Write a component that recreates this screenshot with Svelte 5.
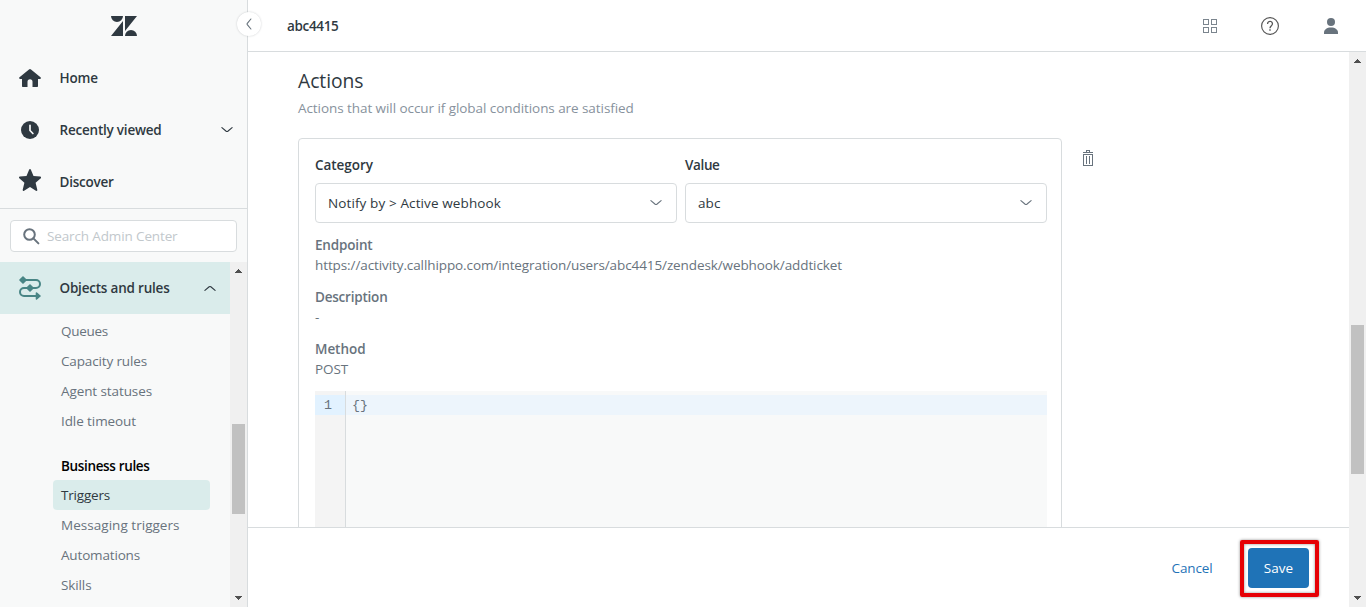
<script>
  const queueLinks = [
    ['Queues', 47],
    ['Capacity rules', 86],
    ['Agent statuses', 91],
    ['Idle timeout', 75]
  ];
  const ruleLinks = [
    ['Triggers', 49],
    ['Messaging triggers', 118.5],
    ['Automations', 79],
    ['Skills', 30.5]
  ];
  const details = [
    ['Endpoint', 57.5, 'https://activity.callhippo.com/integration/users/abc4415/zendesk/webhook/addticket', 527],
    ['Description', 72.5, '-', 6],
    ['Method', 50.5, 'POST', 33]
  ];

  // Tracks a label so that its advance equals the given width.
  function track(node, width) {
    const natural = node.getBoundingClientRect().width;
    const count = node.textContent.length;
    node.style.letterSpacing = `${(width - natural) / count}px`;
  }
</script>

{#snippet chevron(up)}
  <svg class="chevron" class:up width="12" height="8" viewBox="0 0 12 8" fill="none" stroke="currentColor" stroke-linecap="round">
    <path d="M.9 1.6l4.3 3.6c.5.4 1.1.4 1.6 0l4.3-3.6" stroke-width="1.15" />
  </svg>
{/snippet}

{#snippet scrollbar(thumbTop, thumbHeight)}
  <div class="scrollbar">
    <svg class="arrow" width="17" height="17" viewBox="0 0 17 17" shape-rendering="crispEdges"><path d="M5 11h7v-1h-1V9h-1V8H9V7H8v1H7v1H6v1H5z" fill="#505050" /></svg>
    <div class="rail"><div class="thumb" style="margin-top:{thumbTop}px;height:{thumbHeight}px"></div></div>
    <svg class="arrow" width="17" height="17" viewBox="0 0 17 17" shape-rendering="crispEdges"><path d="M5 6h7v1h-1v1h-1v1H9v1H8V9H7V8H6V7H5z" fill="#505050" /></svg>
  </div>
{/snippet}

<div class="app">
  <aside class="sidebar">
    <div class="logo">
      <svg width="26" height="20" viewBox="0 0 26 20" fill="#2f3941">
        <path d="M0 0h12a6 6 0 0 1-12 0zM12 5v15H0zM14 0h12L14 15zM14 20a6 6 0 0 1 12 0z" />
      </svg>
    </div>
    <div class="nav">
      <span class="nav-icon">
        <svg width="22" height="18" viewBox="0 0 22 18" fill="#2f3941">
          <path d="M10 .4a1.6 1.6 0 0 1 2 0l9.5 7.800c.9.800.4 1.800-.6 1.800H19v7c0 .6-.4 1-1 1h-4.500v-5.300a2.500 2.500 0 0 0-5 0V18H4c-.6 0-1-.4-1-1v-7H1.100C.1 10-.4 9 .5 8.200z" />
        </svg>
      </span>
      <span use:track={38.5}>Home</span>
    </div>
    <div class="nav">
      <span class="nav-icon">
        <svg width="18" height="18" viewBox="0 0 18 18">
          <circle cx="9" cy="9" r="9" fill="#2f3941" />
          <path d="M9 4.300v5.200l2.900 3" fill="none" stroke="#f8f9f9" stroke-width="1.7" stroke-linecap="round" />
        </svg>
      </span>
      <span use:track={102}>Recently viewed</span>
      <span class="nav-end">{@render chevron(false)}</span>
    </div>
    <div class="nav">
      <span class="nav-icon star">
        <svg width="22" height="22" viewBox="0 0 22 22" fill="#2f3941">
          <path d="M10.200.6c.3-.800 1.300-.800 1.600 0l2.700 6.500 6.700.5c.9.1 1.200 1.100.6 1.600l-5.200 4.500 1.700 7c.2.900-.7 1.500-1.400 1L11 18.100l-5.900 3.600c-.7.500-1.600-.100-1.400-1l1.700-7L.3 9.200c-.7-.500-.3-1.500.5-1.600l6.700-.5z" />
        </svg>
      </span>
      <span use:track={54}>Discover</span>
    </div>
    <div class="search-area">
      <div class="search">
        <svg width="17" height="17" viewBox="0 0 17 17" fill="none" stroke="#68737d" stroke-width="2">
          <circle cx="6.500" cy="6.500" r="5.300" /><path d="M10.400 10.400l5 5" stroke-linecap="round" />
        </svg>
        <span use:track={130.5}>Search Admin Center</span>
      </div>
    </div>
    <div class="menu-scroll">
      <div class="menu">
        <div class="section">
          <span class="nav-icon">
            <svg width="22" height="24" viewBox="0 0 22 24" fill="none" stroke="#488585" stroke-width="2">
              <path d="M4 4h13a4 4 0 0 1 0 8H5a4 4 0 0 0 0 8h13" />
              <path d="M4 1L7 4 4 7 1 4zM11 9l3 3-3 3-3-3zM17.500 17l3.500 3-3.500 3z" fill="#488585" stroke-width="1.6" stroke-linejoin="round" />
            </svg>
          </span>
          <span use:track={110}>Objects and rules</span>
          <span class="nav-end">{@render chevron(true)}</span>
        </div>
        <ul>
          {#each queueLinks as [label, width]}
            <li><span use:track={width}>{label}</span></li>
          {/each}
        </ul>
        <div class="heading"><span use:track={88.5}>Business rules</span></div>
        <ul class="rules">
          {#each ruleLinks as [label, width], i}
            <li class:current={i === 0}><span use:track={width}>{label}</span></li>
          {/each}
        </ul>
      </div>
      {@render scrollbar(145, 90)}
    </div>
  </aside>

  <main>
    <header>
      <strong use:track={51.5}>abc4415</strong>
      <div class="tools">
        <svg width="14" height="14" viewBox="0 0 14 14" fill="none" stroke="#7b858e" shape-rendering="crispEdges">
          <path d="M.5.5h5v5h-5zM8.500.5h5v5h-5zM.5 8.500h5v5h-5zM8.500 8.500h5v5h-5z" />
        </svg>
        <svg width="18" height="18" viewBox="0 0 18 18" fill="none" stroke="#555">
          <circle cx="9" cy="9" r="8.400" stroke-width="1.15" />
          <path d="M6.600 7V6.700a2.400 2.400 0 1 1 4.100 1.700C9.700 9.400 9 9.700 9 11.200" stroke-width="1.3" />
          <path d="M9 12.300v1.500" stroke-width="1.4" />
        </svg>
        <svg width="14" height="16" viewBox="0 0 14 16" fill="#68737d">
          <circle cx="7" cy="4" r="4" /><path d="M0 16v-1.200C0 11.500 2.800 9.500 7 9.500s7 2 7 5.300V16z" />
        </svg>
      </div>
    </header>

    <div class="body">
      <div class="column">
        <div class="content">
          <h2><span use:track={65.5}>Actions</span></h2>
          <p class="hint"><span use:track={335.8}>Actions that will occur if global conditions are satisfied</span></p>
          <div class="action-row">
            <section class="card">
              <div class="fields">
                <div class="field">
                  <div class="label"><span use:track={58}>Category</span></div>
                  <div class="select"><span use:track={173}>Notify by &gt; Active webhook</span>{@render chevron(false)}</div>
                </div>
                <div class="field">
                  <div class="label"><span use:track={34.5}>Value</span></div>
                  <div class="select"><span use:track={22.5}>abc</span>{@render chevron(false)}</div>
                </div>
              </div>
              <dl>
                {#each details as [name, nameWidth, value, valueWidth]}
                  <dt><span use:track={nameWidth}>{name}</span></dt>
                  <dd><span use:track={valueWidth}>{value}</span></dd>
                {/each}
              </dl>
              <div class="editor">
                <div class="gutter"><div>1</div></div>
                <div class="code"><div>{'{}'}</div></div>
              </div>
            </section>
            <svg class="trash" width="12" height="16" viewBox="0 0 12 16" fill="none" stroke="#68737d" shape-rendering="crispEdges">
              <path d="M1.500 4.500h9v11h-9zM1 2.500h10M4.500 2V.5h3V2M4.500 6v8M7.500 6v8" />
            </svg>
          </div>
        </div>
        <footer>
          <span class="cancel" use:track={41}>Cancel</span>
          <div class="highlight"><button><span use:track={29.5}>Save</span></button></div>
        </footer>
      </div>
      {@render scrollbar(256, 149)}
    </div>
  </main>

  <div class="collapse">
    <svg width="6" height="12" viewBox="0 0 6 12" fill="none" stroke="#68737d" stroke-width="1.15" stroke-linecap="round">
      <path d="M4.900 1L1.300 5.300c-.3.400-.3 1 0 1.400L4.900 11" />
    </svg>
  </div>
</div>

<style>
  :global(body) { margin: 0; overflow: hidden; }
  .app {
    position: relative;
    display: flex;
    width: 1366px;
    height: 607px;
    overflow: hidden;
    background: #fff;
    color: #2f3941;
    font: 13.5px/20px "Open Sans", "Noto Sans", sans-serif;
    white-space: nowrap;
  }
  .app :global(*) { box-sizing: border-box; }
  svg { display: block; flex: none; }
  ul, dl, dd, h2, p { margin: 0; padding: 0; list-style: none; }

  .sidebar {
    display: flex;
    flex-direction: column;
    flex: none;
    width: 248px;
    background: #f8f9f9;
    border-right: 1px solid #d8dcde;
  }
  .logo { display: flex; align-items: center; justify-content: center; height: 52px; }
  .nav, .section { display: flex; align-items: center; height: 52px; font-weight: 600; }
  .nav-icon { display: flex; justify-content: center; width: 60px; margin-right: -.5px; }
  .star { padding-bottom: 4px; }
  .nav-end { margin-left: auto; margin-right: 14px; }
  .chevron.up { transform: scaleY(-1); }
  .search-area { height: 54px; padding: 11px 10px 0; border-top: 1px solid #d8dcde; }
  .search {
    display: flex;
    align-items: center;
    gap: 7px;
    height: 32px;
    padding-left: 12px;
    background: #fff;
    border: 1px solid #d8dcde;
    border-radius: 4px;
    color: #c2c8cc;
  }
  .menu-scroll { display: flex; flex: 1; min-height: 0; }
  .menu { flex: 1; overflow: hidden; }
  .section { background: #daeceb; }
  .menu ul { padding: 2px 20px 0 53px; color: #68737d; }
  .menu .rules { padding-top: 0; }
  li { display: flex; align-items: center; height: 30px; padding-left: 8px; border-radius: 4px; }
  li.current { background: #daeceb; color: #2f3941; }
  .heading { height: 28px; margin-top: 16px; padding-left: 61px; line-height: 28px; font-weight: 600; color: #000; }

  .scrollbar { display: flex; flex-direction: column; flex: none; width: 17px; background: #f0f0f0; }
  .rail { flex: 1; padding: 0 2px; }
  .thumb { width: 13px; background: #c1c1c1; }

  main { display: flex; flex-direction: column; flex: 1; min-width: 0; }
  header {
    display: flex;
    align-items: center;
    justify-content: space-between;
    flex: none;
    height: 52px;
    padding: 0 28px 0 39px;
    border-bottom: 1px solid #d8dcde;
  }
  header strong { font-weight: 600; }
  .tools { display: flex; gap: 44px; align-items: center; padding-top: 1px; }
  .tools svg:last-child { margin-left: 1px; }
  .body { display: flex; flex: 1; min-height: 0; }
  .column { display: flex; flex-direction: column; flex: 1; }
  .content { flex: 1; min-height: 0; overflow: hidden; padding: 15px 0 0 50px; }
  h2 { font-size: 19.3px; line-height: 28px; font-weight: 400; }
  .hint { margin-top: 3px; color: #87929d; }
  .action-row { display: flex; align-items: flex-start; gap: 20px; margin-top: 20px; }
  .card { width: 764px; height: 520px; padding: 16px 14px 16px 16px; border: 1px solid #d8dcde; border-radius: 4px; }
  .fields { display: flex; gap: 8px; }
  .field { flex: 1; }
  .label { font-weight: 600; }
  .select {
    display: flex;
    align-items: center;
    justify-content: space-between;
    height: 40px;
    margin-top: 8px;
    padding: 0 14px 0 12px;
    border: 1px solid #d8dcde;
    border-radius: 4px;
  }
  .select .chevron { color: #68737d; }
  dl { padding-top: 12px; color: #68737d; }
  dt { font-weight: 600; }
  dd { margin-bottom: 12px; }
  .editor { display: flex; height: 240px; font: 13.3px/22px "Liberation Mono", monospace; }
  .gutter { width: 31px; padding-top: 4px; background: #f4f4f4; border-right: 1px solid #d8dcde; color: #68737d; }
  .gutter div { height: 20px; padding-left: 9px; background: #e2f2ff; }
  .code { flex: 1; padding-top: 4px; background: #f8f9f9; color: #68737d; }
  .code div { height: 20px; padding-left: 6px; background: #edf5fc; }
  .trash { margin: 12px 0 0; }

  footer {
    display: flex;
    align-items: center;
    justify-content: flex-end;
    flex: none;
    height: 80px;
    padding: 2px 30px 0 0;
    border-top: 1px solid #d8dcde;
  }
  .cancel { margin: 0 27.5px 2px 0; color: #1f73b7; }
  .highlight {
    width: 79px;
    height: 57px;
    margin-bottom: 1px;
    padding: 4px;
    border: 4px solid #e60005;
    border-radius: 2px;
    box-shadow: 0 0 3px rgba(0, 0, 0, .45), inset 0 0 3px rgba(0, 0, 0, .45);
  }
  button {
    display: block;
    width: 61px;
    height: 40px;
    margin: 0;
    padding: 0;
    border: 0;
    border-radius: 4px;
    background: #1f73b7;
    color: #fff;
    font: inherit;
  }
  .collapse {
    position: absolute;
    left: 237px;
    top: 12px;
    display: flex;
    align-items: center;
    justify-content: center;
    width: 24px;
    height: 24px;
    border-radius: 50%;
    background: #fff;
    box-shadow: 0 0 2px rgba(47, 57, 65, .25);
  }
</style>
